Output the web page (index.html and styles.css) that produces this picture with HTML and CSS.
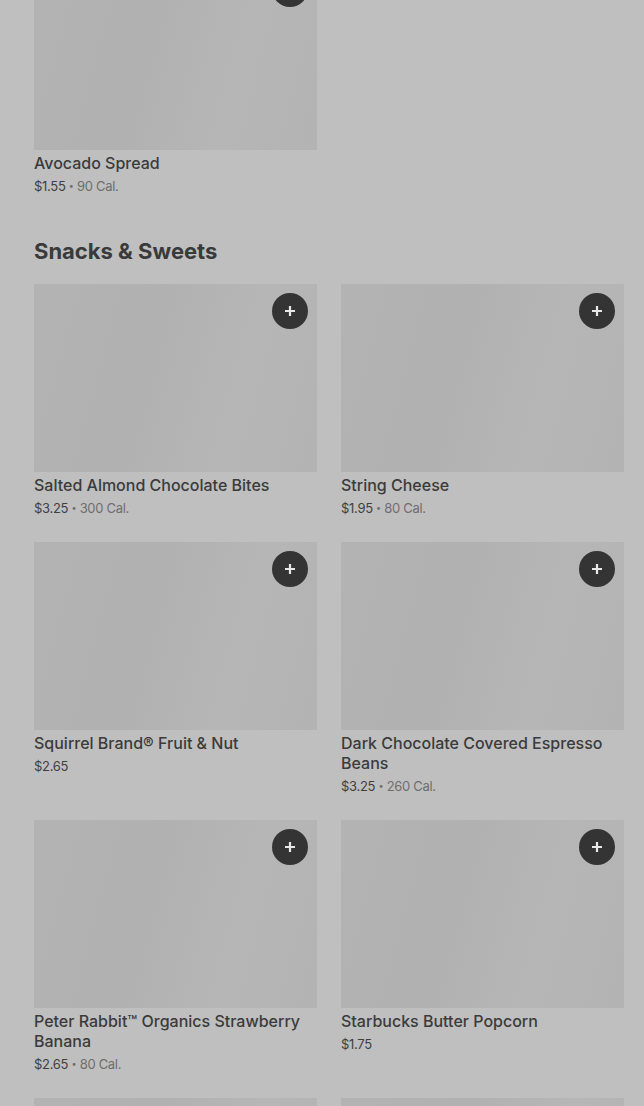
FILE: index.html
```html
<!DOCTYPE html>
<html lang="en">
<head>
    <meta charset="UTF-8">
    <meta name="viewport" content="width=device-width, initial-scale=1.0">
    <title>Menu</title>
    <link rel="stylesheet" href="styles.css">
</head>
<body>
    <div class="menu">
        <section class="section section-top">
            <div class="grid">
                <div class="item">
                    <div class="photo">
                        <button class="add"><svg viewBox="0 0 12 12" width="12" height="12"><path d="M6 1v10M1 6h10" stroke="#e8e8e8" stroke-width="2.2"/></svg></button>
                    </div>
                    <div class="name">Avocado Spread</div>
                    <div class="meta">$1.55 <span class="cal"><span class="dot">&bull;</span> 90 Cal.</span></div>
                </div>
            </div>
        </section>

        <section class="section">
            <h2>Snacks &amp; Sweets</h2>
            <div class="grid">
                <div class="item">
                    <div class="photo">
                        <button class="add"><svg viewBox="0 0 12 12" width="12" height="12"><path d="M6 1v10M1 6h10" stroke="#e8e8e8" stroke-width="2.2"/></svg></button>
                    </div>
                    <div class="name">Salted Almond Chocolate Bites</div>
                    <div class="meta">$3.25 <span class="cal"><span class="dot">&bull;</span> 300 Cal.</span></div>
                </div>
                <div class="item">
                    <div class="photo">
                        <button class="add"><svg viewBox="0 0 12 12" width="12" height="12"><path d="M6 1v10M1 6h10" stroke="#e8e8e8" stroke-width="2.2"/></svg></button>
                    </div>
                    <div class="name">String Cheese</div>
                    <div class="meta">$1.95 <span class="cal"><span class="dot">&bull;</span> 80 Cal.</span></div>
                </div>
                <div class="item">
                    <div class="photo">
                        <button class="add"><svg viewBox="0 0 12 12" width="12" height="12"><path d="M6 1v10M1 6h10" stroke="#e8e8e8" stroke-width="2.2"/></svg></button>
                    </div>
                    <div class="name">Squirrel Brand&reg; Fruit &amp; Nut</div>
                    <div class="meta">$2.65</div>
                </div>
                <div class="item">
                    <div class="photo">
                        <button class="add"><svg viewBox="0 0 12 12" width="12" height="12"><path d="M6 1v10M1 6h10" stroke="#e8e8e8" stroke-width="2.2"/></svg></button>
                    </div>
                    <div class="name">Dark Chocolate Covered Espresso Beans</div>
                    <div class="meta">$3.25 <span class="cal"><span class="dot">&bull;</span> 260 Cal.</span></div>
                </div>
                <div class="item">
                    <div class="photo">
                        <button class="add"><svg viewBox="0 0 12 12" width="12" height="12"><path d="M6 1v10M1 6h10" stroke="#e8e8e8" stroke-width="2.2"/></svg></button>
                    </div>
                    <div class="name">Peter Rabbit&trade; Organics Strawberry Banana</div>
                    <div class="meta">$2.65 <span class="cal"><span class="dot">&bull;</span> 80 Cal.</span></div>
                </div>
                <div class="item">
                    <div class="photo">
                        <button class="add"><svg viewBox="0 0 12 12" width="12" height="12"><path d="M6 1v10M1 6h10" stroke="#e8e8e8" stroke-width="2.2"/></svg></button>
                    </div>
                    <div class="name">Starbucks Butter Popcorn</div>
                    <div class="meta">$1.75</div>
                </div>
                <div class="item">
                    <div class="photo">
                        <button class="add"><svg viewBox="0 0 12 12" width="12" height="12"><path d="M6 1v10M1 6h10" stroke="#e8e8e8" stroke-width="2.2"/></svg></button>
                    </div>
                </div>
                <div class="item">
                    <div class="photo">
                        <button class="add"><svg viewBox="0 0 12 12" width="12" height="12"><path d="M6 1v10M1 6h10" stroke="#e8e8e8" stroke-width="2.2"/></svg></button>
                    </div>
                </div>
            </div>
        </section>
    </div>
</body>
</html>
```

FILE: styles.css
```css
body {
    margin: 0;
    height: 1106px;
    background-color: #bfbfbf;
    color: #3c3c3c;
    font-family: Inter, "Noto Sans", sans-serif;
    overflow: hidden;
}
.menu {
    padding: 0 20px 0 34px;
    margin-top: -38px;
}
.section-top {
    margin-bottom: 41px;
}
h2 {
    margin: 0 0 19px;
    font-size: 22px;
    line-height: 28px;
    font-weight: 700;
    color: #3a3a3a;
}
.grid {
    display: grid;
    grid-template-columns: 1fr 1fr;
    column-gap: 24px;
    row-gap: 24px;
}
.photo {
    position: relative;
    height: 188px;
    background: linear-gradient(105deg, #b3b3b3 0%, #b1b1b1 40%, #b6b6b6 70%, #b3b3b3 100%);
}
.add {
    position: absolute;
    top: 9px;
    right: 9px;
    width: 36px;
    height: 36px;
    border: none;
    border-radius: 50%;
    background-color: #343434;
    padding: 0;
    display: flex;
    align-items: center;
    justify-content: center;
}
.name {
    margin-top: 3px;
    font-size: 16px;
    line-height: 20px;
    font-weight: 500;
    color: #3b3b3b;
}
.meta {
    margin-top: 3px;
    font-size: 13px;
    line-height: 20px;
    letter-spacing: -0.3px;
    color: #3f3f3f;
}
.cal {
    color: #6e6e6e;
}
.dot {
    font-size: 9px;
    vertical-align: 2px;
}
```
